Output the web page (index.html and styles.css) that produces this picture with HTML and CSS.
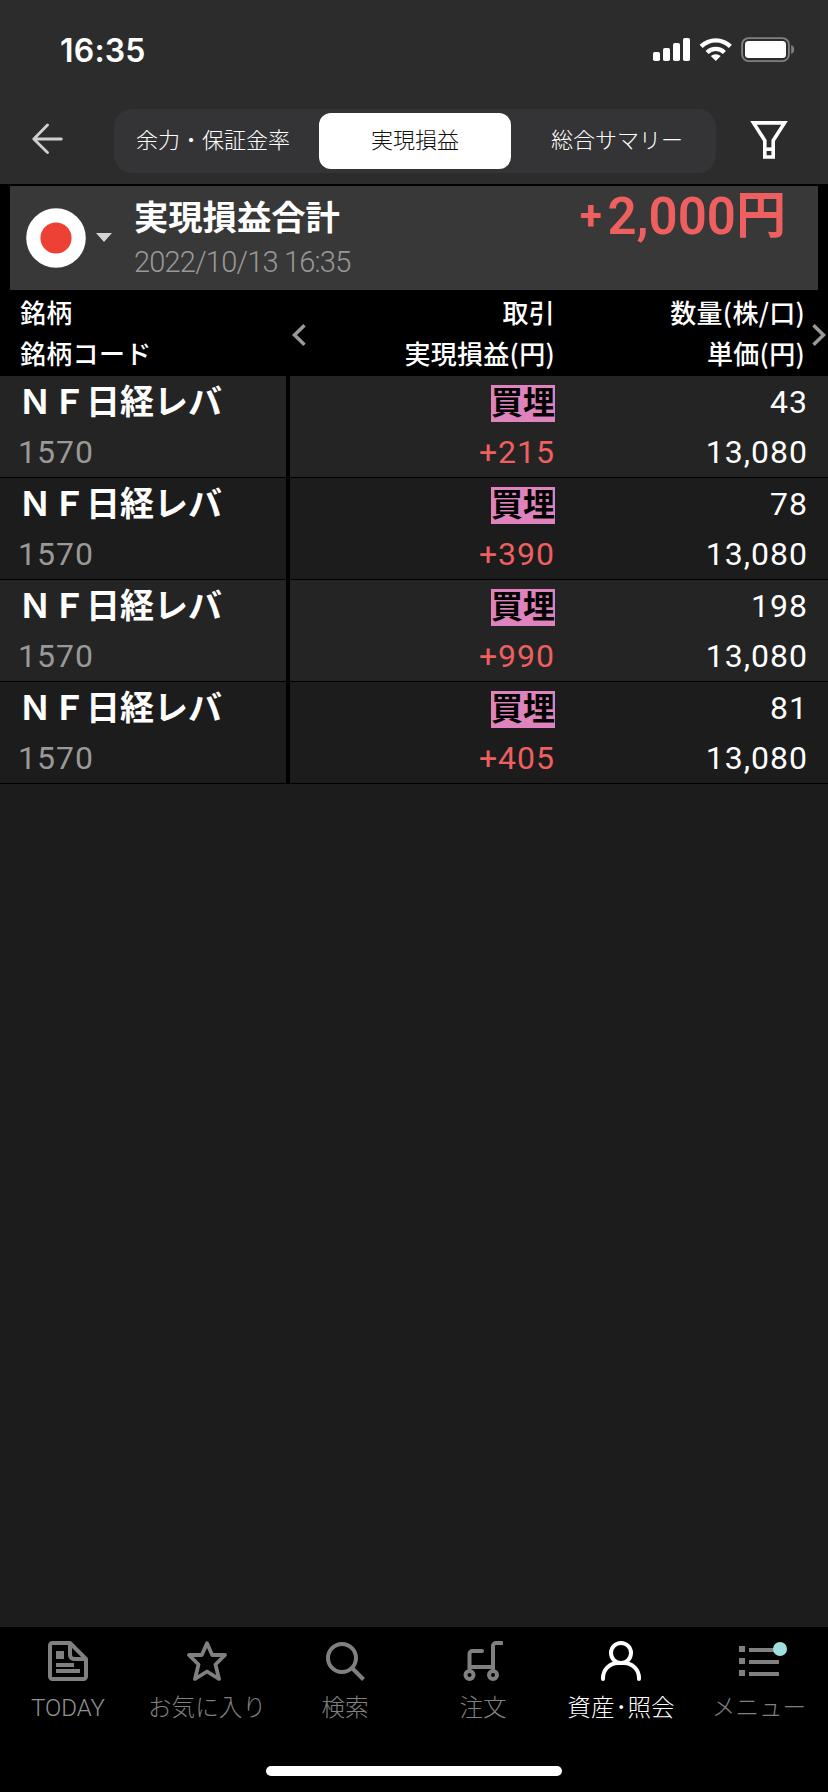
FILE: index.html
```html
<!DOCTYPE html>
<html lang="ja">
<head>
<meta charset="utf-8">
<title>実現損益</title>
<link rel="stylesheet" href="styles.css">
</head>
<body>
<div class="screen">
  <header class="top">
    <div class="status">
      <span class="clock">16:35</span>
      <svg class="status-icons" width="142" height="26" viewBox="0 0 142 26" fill="#fff">
        <rect x="0" y="15" width="7" height="9" rx="1.8"/><rect x="10" y="11" width="7" height="13" rx="1.8"/><rect x="20" y="6" width="7" height="18" rx="1.8"/><rect x="30" y="1" width="7" height="23" rx="1.8"/>
        <path d="M46.6 7.8a23 23 0 0 1 32.3 0l-3 3.1a18.7 18.7 0 0 0-26.3 0zM52.6 13.9a14.6 14.6 0 0 1 20.3 0l-3 3a10.3 10.3 0 0 0-14.3 0zM57.8 19.1a7.2 7.2 0 0 1 9.9 0l-4.9 4.9z"/>
        <rect x="89.1" y="1.1" width="46.8" height="23" rx="6.5" fill="none" stroke="#808080" stroke-width="1.9"/>
        <rect x="92" y="4" width="41" height="17" rx="3.5"/>
        <path d="M138.200 8q3 1.300 3 4.500t-3 4.500z" fill="#808080"/>
      </svg>
    </div>
    <nav class="nav">
      <svg class="back" width="32" height="32" viewBox="0 0 32 32" fill="none" stroke="#d0d0d0" stroke-width="2.8" stroke-linecap="round" stroke-linejoin="round"><path d="M15.500 2 1.800 16l13.700 13.500M1.800 16h27.500"/></svg>
      <div class="segments">
        <span class="segment">余力・保証金率</span>
        <span class="segment segment-on">実現損益</span>
        <span class="segment">総合サマリー</span>
      </div>
      <svg class="filter" width="38" height="38" viewBox="0 0 38 38" fill="none" stroke="#fff" stroke-width="3.600"><path d="M3.500 1.900h31L23.200 19.500V36h-8.400V19.500z"/><path d="M14.500 28.200h9"/></svg>
    </nav>
  </header>

  <section class="summary">
    <svg class="flag" width="60" height="60" viewBox="0 0 60 60"><circle cx="30" cy="30" r="29.800" fill="#fff"/><circle cx="30" cy="30" r="15.600" fill="#ee4136"/></svg>
    <svg class="caret" width="16" height="9" viewBox="0 0 16 9"><path d="M0 0h16L8 9z" fill="#d4d4d4"/></svg>
    <div class="summary-text">
      <h1 class="summary-title">実現損益合計</h1>
      <time class="summary-time">2022/10/13 16:35</time>
    </div>
    <div class="total"><span class="plus">+</span><span class="digits">2,000</span><span class="yen">円</span></div>
  </section>

  <div class="head">
    <div class="head-name"><span>銘柄</span><span>銘柄コード</span></div>
    <svg class="chev" width="16" height="22" viewBox="0 0 16 22" fill="none" stroke="#999" stroke-width="3.500"><path d="M13.500 1.300 3.500 11l10 9.700"/></svg>
    <div class="head-trade"><span>取引</span><span>実現損益(円)</span></div>
    <div class="head-qty"><span>数量(株/口)</span><span>単価(円)</span></div>
    <svg class="chev" width="16" height="22" viewBox="0 0 16 22" fill="none" stroke="#999" stroke-width="3.500"><path d="M2.500 1.300 12.500 11l-10 9.700"/></svg>
  </div>

  <main class="rows">
    <div class="row">
      <div class="cell name"><b class="stock">ＮＦ日経レバ</b><span class="code">1570</span></div>
      <div class="cell trade"><span class="tagline"><b class="tag">買埋</b></span><span class="gain">+215</span></div>
      <div class="cell qty"><span>43</span><span>13,080</span></div>
    </div>
    <div class="row">
      <div class="cell name"><b class="stock">ＮＦ日経レバ</b><span class="code">1570</span></div>
      <div class="cell trade"><span class="tagline"><b class="tag">買埋</b></span><span class="gain">+390</span></div>
      <div class="cell qty"><span>78</span><span>13,080</span></div>
    </div>
    <div class="row">
      <div class="cell name"><b class="stock">ＮＦ日経レバ</b><span class="code">1570</span></div>
      <div class="cell trade"><span class="tagline"><b class="tag">買埋</b></span><span class="gain">+990</span></div>
      <div class="cell qty"><span>198</span><span>13,080</span></div>
    </div>
    <div class="row">
      <div class="cell name"><b class="stock">ＮＦ日経レバ</b><span class="code">1570</span></div>
      <div class="cell trade"><span class="tagline"><b class="tag">買埋</b></span><span class="gain">+405</span></div>
      <div class="cell qty"><span>81</span><span>13,080</span></div>
    </div>
  </main>

  <footer class="bottom">
    <div class="tabs">
      <div class="tab today">
        <svg width="40" height="40" viewBox="0 0 40 40" fill="none" stroke="currentColor" stroke-width="4" stroke-linejoin="round"><path d="M4.500 2H22l16 16v17.500a2.500 2.500 0 0 1-2.500 2.500h-31A2.500 2.500 0 0 1 2 35.500v-31A2.500 2.500 0 0 1 4.500 2z"/><path d="M22 2v11.500q0 4.500 4.500 4.500H38"/><path d="M8 10h8v8H8zM8 22h18v4H8zM8 28h24v4H8z" fill="currentColor" stroke="none"/></svg>
        <span class="latin">TODAY</span>
      </div>
      <div class="tab">
        <svg width="40" height="40" viewBox="0 0 40 40" fill="none" stroke="currentColor" stroke-width="3.800" stroke-linejoin="round"><path d="M20 2.200 25.200 14H38l-9.500 9.500L32 38l-12-7.500L8 38l3.500-14.500L2 14h12.800z"/></svg>
        <span>お気に入り</span>
      </div>
      <div class="tab">
        <svg width="40" height="40" viewBox="0 0 40 40" fill="none" stroke="currentColor" stroke-width="4"><circle cx="17" cy="17" r="14"/><path d="m27 27 11.500 11.500"/></svg>
        <span>検索</span>
      </div>
      <div class="tab">
        <svg width="40" height="40" viewBox="0 0 40 40" fill="none" stroke="currentColor" stroke-width="4" stroke-linecap="round"><path d="M19 10H9.500a3 3 0 0 0-3 3v15M39 2h-6a3 3 0 0 0-3 3v23M6.500 26H30"/><circle cx="6.500" cy="34" r="4"/><circle cx="30" cy="34" r="4"/></svg>
        <span>注文</span>
      </div>
      <div class="tab tab-on">
        <svg width="40" height="40" viewBox="0 0 40 40" fill="none" stroke="currentColor" stroke-width="4" stroke-linecap="round"><circle cx="20" cy="12" r="10"/><path d="M2 38v-1a15 15 0 0 1 15-15h6a15 15 0 0 1 15 15v1"/></svg>
        <span class="mixed">資産<i class="dot">·</i>照会</span>
      </div>
      <div class="tab">
        <svg class="menu-icon" width="48" height="40" viewBox="0 0 48 40" fill="currentColor"><path d="M0 5h6v6H0zM0 17h6v6H0zM0 29h6v6H0zM10 7h30v4H10zM10 19h30v4H10zM10 31h30v4H10z"/><circle cx="41" cy="8" r="7" fill="#9fdfe0"/></svg>
        <span>メニュー</span>
      </div>
    </div>
    <div class="home"></div>
  </footer>
</div>
</body>
</html>
```
FILE: styles.css
```css
* { box-sizing: border-box; }
body { margin: 0; background: #000; color: #fff; font-family: "Noto Sans CJK JP", sans-serif; }
svg { display: block; flex: none; }
.screen { width: 828px; height: 1792px; display: flex; flex-direction: column; background: #1c1c1c; overflow: hidden; }

.top { height: 184px; background: #2c2c2c; }
.status { height: 109px; padding: 37px 33px 0 60px; display: flex; justify-content: space-between; align-items: flex-start; }
.clock { font: 600 32px/28px Inter, sans-serif; letter-spacing: 0.2px; }
.nav { display: flex; align-items: center; height: 64px; padding-left: 32px; }
.back { margin-top: -4px; }
.segments { width: 602px; height: 64px; margin-left: 50px; display: grid; grid-template-columns: 205px 192px 205px; padding: 4px 0; background: #343436; border-radius: 18px; }
.segment { height: 56px; font-size: 22px; font-weight: 300; line-height: 51px; text-align: center; white-space: nowrap; }
.segment:first-child { padding-right: 7px; }
.segment:last-child { padding-left: 7px; }
.segment-on { background: #fff; color: #111; border-radius: 12px; }
.filter { margin-left: 34px; margin-top: -3px; }

.summary { height: 106px; border: solid #000; border-width: 2px 10px 0; background: #383838; display: flex; align-items: flex-start; }
.flag { margin: 22px 0 0 16px; }
.caret { margin: 47px 0 0 10px; }
.summary-text { margin: 9px 0 0 22px; display: flex; flex-direction: column; }
.summary-title { margin: 0; font-size: 34.300px; font-weight: 700; line-height: 40px; }
.summary-time { font: 300 29px/34px Roboto, sans-serif; letter-spacing: -0.8px; color: #999; margin-top: 10px; white-space: nowrap; }
.total { margin: 0 32px 0 auto; display: flex; height: 60px; color: #ee5f60; }
.plus { font: 700 40px/60px Roboto, sans-serif; margin-right: 6px; }
.digits { font: 600 51px/62px Roboto, sans-serif; }
.yen { font-size: 50px; font-weight: 700; line-height: 50px; }

.head { height: 86px; padding-bottom: 2px; background: #000; display: flex; align-items: center; font-size: 26px; font-weight: 500; letter-spacing: 0.3px; }
.head span { display: block; line-height: 41px; white-space: nowrap; }
.head-name { width: 291px; padding-left: 20px; }
.head-trade { width: 248px; text-align: right; }
.head-qty { width: 250px; text-align: right; margin-right: 6px; }
.chev { margin-top: 5px; }

.row { display: grid; grid-template-columns: 290px 265px 1fr; height: 102px; border-bottom: 1px solid #000; background: #1c1c1c; }
.row:nth-child(odd) { background: #242424; }
.cell { display: flex; flex-direction: column; height: 101px; font: 400 32px/52px Roboto, sans-serif; letter-spacing: 1px; }
.cell > span:last-child { line-height: 49px; }
.name { border-right: 4px solid #000; padding-left: 18px; }
.stock { font: 700 34px/47px "Noto Sans CJK JP", sans-serif; letter-spacing: 0; margin-bottom: 5px; white-space: nowrap; }
.code { color: #999; }
.trade { text-align: right; }
.gain { color: #ee5f60; }
.tagline { height: 52px; padding-top: 9px; display: flex; justify-content: flex-end; }
.tag { width: 64px; height: 37px; background: #de83bd; color: #000; font: 700 32px/30px "Noto Sans CJK JP", sans-serif; letter-spacing: 0; }
.qty { text-align: right; padding-right: 20px; }

.bottom { margin-top: auto; height: 165px; background: #000; display: flex; flex-direction: column; }
.tabs { display: grid; grid-template-columns: repeat(6, 138px); padding-top: 14px; flex: 1; }
.tab { display: flex; flex-direction: column; align-items: center; color: #808080; font-size: 23.600px; font-weight: 300; line-height: 34px; white-space: nowrap; }
.today { padding-right: 2px; }
.tab span { margin-top: 8px; }
.tab .latin { font: 300 24px/34px Roboto, sans-serif; margin-top: 10px; color: #919191; }
.tab-on { color: #fff; }
.dot { font-style: normal; display: inline-block; width: 13px; text-align: center; font-weight: 500; }
.menu-icon { margin-left: 8px; }
.home { width: 296px; height: 10px; margin: 0 auto 16px; background: #fff; border-radius: 5px; }
```
